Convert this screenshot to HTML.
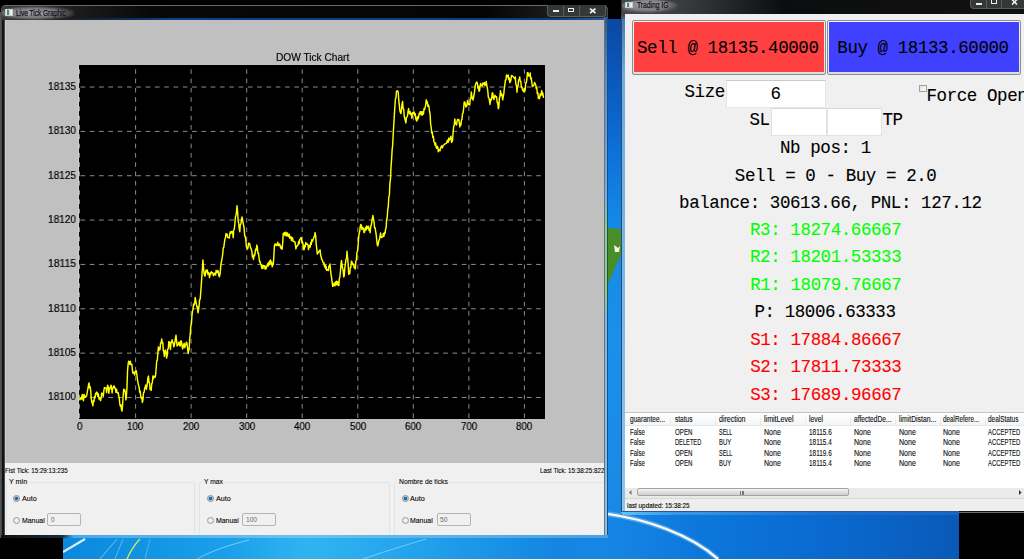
<!DOCTYPE html>
<html><head><meta charset="utf-8"><style>
html,body{margin:0;padding:0;}
body{width:1024px;height:559px;background:#000;position:relative;overflow:hidden;font-family:"Liberation Sans",sans-serif;}
.abs{position:absolute;}
.t{position:absolute;white-space:pre;}
</style></head><body>
<div class="abs" style="left:608px;top:19px;width:14px;height:500px;background:linear-gradient(#0a48a4 0px,#0a58bc 60px,#0c70d8 130px,#1488e6 200px,#1a90ea 320px,#1a88e6 500px)"></div>
<svg class="abs" style="left:608px;top:220px" width="14" height="80"><polygon points="0,8 14,9 14,32 0,64" fill="#4a8e2a"/><path d="M6,25 L10,28 L12,26 L11,32 L7,32 Z" fill="#f4f8f0"/></svg>
<div class="abs" style="left:63px;top:514px;width:896px;height:45px;background:linear-gradient(90deg,#0a88de 0px,#1aa0ea 164px,#30b4f0 246px,#22a2ec 355px,#1486e2 490px,#1686e4 545px,#0c78dc 633px,#0a6cd2 738px,#0a60c2 843px,#0a58b6 896px)"></div>
<svg class="abs" style="left:600px;top:510px" width="160" height="49"><path d="M8,4 C45,9 90,24 118,49" fill="none" stroke="rgba(255,255,255,0.3)" stroke-width="5"/><path d="M8,4 C45,9 90,24 118,49" fill="none" stroke="#fff" stroke-width="2.2"/></svg>
<svg class="abs" style="left:63px;top:538px" width="546" height="21"><path d="M0,14 L22,1" stroke="rgba(255,255,255,0.85)" stroke-width="2.2"/><path d="M37,21 L54,1" stroke="rgba(200,235,255,0.55)" stroke-width="1"/><path d="M52,21 L60,1" stroke="rgba(200,235,255,0.45)" stroke-width="1"/><path d="M64,21 C68,12 72,6 77,1" fill="none" stroke="#c8f050" stroke-width="1.3"/><path d="M82,21 L87,1" stroke="rgba(200,235,255,0.35)" stroke-width="1"/><path d="M134,21 C150,12 170,6 186,2" fill="none" stroke="rgba(220,245,255,0.5)" stroke-width="1"/><path d="M300,21 C320,14 340,8 363,1" fill="none" stroke="rgba(220,245,255,0.45)" stroke-width="1"/></svg>
<div class="abs" style="left:0px;top:12px;width:1px;height:526px;background:#505452"></div>
<div class="abs" style="left:1px;top:5px;width:607px;height:533px;background:#44484a;border-radius:5px 5px 0 0;box-shadow:inset 0 1px 0 #6a6a6a"></div>
<div class="abs" style="left:2px;top:6px;width:605px;height:14px;border-radius:4px 4px 0 0;background:linear-gradient(90deg,#3a3d3f 0%,#202223 8%,#070809 25%,#040506 80%,#2a2c2e 100%)"></div>
<div class="abs" style="left:62px;top:18px;width:545px;height:2px;background:linear-gradient(90deg,rgba(20,60,130,0),#10408a 20%,#0c3a80 90%,#2a5aa0)"></div>
<div class="abs" style="left:2px;top:6px;width:72px;height:14px;border-radius:40%;background:radial-gradient(ellipse at 45% 50%,rgba(175,175,175,0.9) 0%,rgba(150,150,150,0.75) 45%,rgba(90,90,90,0.3) 70%,rgba(60,60,60,0) 85%)"></div>
<div class="abs" style="left:2px;top:20px;width:3px;height:518px;background:linear-gradient(90deg,#1c1e1f,#050505 40%,#5e6264)"></div>
<div class="abs" style="left:604px;top:17px;width:4px;height:521px;background:linear-gradient(#2a5aa0 0px,#4a90d8 60px,#6ab4ec 180px,#8ad07a 215px,#8ad07a 275px,#70bcf0 300px,#7ac8f4 521px);border-left:1px solid #687078;border-right:1px solid #2a4a70;box-sizing:border-box;border-radius:0 0 3px 0"></div>
<div class="abs" style="left:1px;top:535px;width:607px;height:3px;background:linear-gradient(90deg,#101010 0%,#1a2a3a 10%,#4aa8e8 12%,#6ac0f0 50%,#4aa0e0 100%)"></div>
<div class="abs" style="left:5px;top:20px;width:599px;height:443px;background:#c0c0c0;box-shadow:inset 1px 0 0 #cbcbcb"></div>
<div class="abs" style="left:5px;top:463px;width:599px;height:72px;background:#f0f0f0"></div>
<div class="abs" style="left:5px;top:9px;width:8px;height:7px;background:linear-gradient(90deg,#e8eef0 0%,#e8eef0 15%,#3a7a9a 15%,#40a070 50%,#e0e8e8 60%,#f4f4f4 100%);border:0.5px solid #ccc;box-sizing:border-box"></div>
<div class="abs" style="left:547px;top:5px;width:59px;height:12px;border-radius:0 0 4px 4px;background:#353839;border:1px solid #5a5d5f;border-top:none;box-sizing:border-box"></div>
<div class="abs" style="left:563px;top:6px;width:1px;height:10px;background:#5a5d5f"></div>
<div class="abs" style="left:579px;top:6px;width:1px;height:10px;background:#5a5d5f"></div>
<div class="abs" style="left:553px;top:10px;width:6px;height:2px;background:#f0f0f0"></div>
<div class="abs" style="left:568px;top:7.8px;width:6px;height:4.6px;border:1px solid #f0f0f0;border-top-width:1.6px;box-sizing:border-box"></div>
<svg class="abs" style="left:588.5px;top:7.5px" width="8" height="6"><path d="M1,0.6 L6.5,5.2 M6.5,0.6 L1,5.2" stroke="#f0f0f0" stroke-width="1.7"/></svg>
<svg class="abs" style="left:0;top:0" width="1024" height="559">
<rect x="79" y="65" width="466" height="354" fill="#000"/><line x1="78.5" y1="65" x2="78.5" y2="419" stroke="#cdcdcd" stroke-width="1"/>
<g stroke="#8c8c8c" stroke-width="1" stroke-dasharray="4.65 4.65"><line x1="80" y1="397.50" x2="545" y2="397.50" stroke-dashoffset="-0.5"/><line x1="80" y1="353.14" x2="545" y2="353.14" stroke-dashoffset="-0.5"/><line x1="80" y1="308.79" x2="545" y2="308.79" stroke-dashoffset="-0.5"/><line x1="80" y1="264.43" x2="545" y2="264.43" stroke-dashoffset="-0.5"/><line x1="80" y1="220.07" x2="545" y2="220.07" stroke-dashoffset="-0.5"/><line x1="80" y1="175.72" x2="545" y2="175.72" stroke-dashoffset="-0.5"/><line x1="80" y1="131.36" x2="545" y2="131.36" stroke-dashoffset="-0.5"/><line x1="80" y1="87.00" x2="545" y2="87.00" stroke-dashoffset="-0.5"/><line x1="79.5" y1="419" x2="79.5" y2="65" stroke-dashoffset="-1"/><line x1="135.6" y1="419" x2="135.6" y2="65" stroke-dashoffset="-1"/><line x1="191.1" y1="419" x2="191.1" y2="65" stroke-dashoffset="-1"/><line x1="246.7" y1="419" x2="246.7" y2="65" stroke-dashoffset="-1"/><line x1="302.2" y1="419" x2="302.2" y2="65" stroke-dashoffset="-1"/><line x1="357.8" y1="419" x2="357.8" y2="65" stroke-dashoffset="-1"/><line x1="413.3" y1="419" x2="413.3" y2="65" stroke-dashoffset="-1"/><line x1="468.9" y1="419" x2="468.9" y2="65" stroke-dashoffset="-1"/><line x1="524.4" y1="419" x2="524.4" y2="65" stroke-dashoffset="-1"/></g>
<polyline points="79.7,400.4 80.2,397.8 80.8,398.3 81.3,399.2 81.9,396.3 82.4,394.4 83.0,399.8 83.5,400.8 84.1,394.4 84.6,396.3 85.2,397.3 85.7,396.2 86.3,396.6 86.8,395.2 87.4,391.2 87.9,388.8 88.5,384.9 89.0,382.9 89.6,387.9 90.1,386.6 90.7,390.6 91.2,397.9 91.8,402.1 92.3,403.1 92.9,405.8 93.4,400.5 94.0,401.6 94.5,396.4 95.1,397.9 95.6,393.3 96.2,394.2 96.7,392.1 97.3,392.7 97.8,396.4 98.4,394.0 98.9,399.0 99.5,397.6 100.0,399.4 100.6,400.7 101.1,398.5 101.7,393.0 102.2,393.5 102.8,394.5 103.3,396.3 103.9,390.4 104.4,387.6 105.0,388.0 105.5,388.0 106.1,388.0 106.6,392.6 107.2,387.8 107.7,385.2 108.3,387.1 108.8,393.3 109.4,388.0 109.9,389.0 110.5,386.9 111.0,385.2 111.6,387.4 112.1,392.9 112.7,388.0 113.2,388.0 113.8,385.9 114.3,386.2 114.9,388.1 115.4,389.1 116.0,392.3 116.5,389.1 117.1,392.3 117.6,393.1 118.2,392.7 118.7,395.6 119.3,398.4 119.8,403.9 120.4,406.3 120.9,404.7 121.5,409.5 122.0,411.1 122.6,404.8 123.1,396.3 123.7,389.3 124.2,391.2 124.8,389.8 125.3,392.6 125.9,399.9 126.4,396.2 127.0,387.0 127.5,371.4 128.1,364.4 128.6,361.2 129.2,362.8 129.7,364.4 130.3,361.2 130.8,364.4 131.4,364.4 131.9,364.3 132.5,371.2 133.0,373.4 133.6,372.5 134.1,372.2 134.7,375.0 135.2,371.5 135.8,371.1 136.3,370.7 136.9,375.1 137.4,379.0 138.0,382.9 138.5,385.2 139.1,387.2 139.7,392.4 140.2,391.2 140.8,396.4 141.3,398.4 141.9,397.2 142.4,402.4 143.0,399.7 143.5,392.8 144.1,392.3 144.6,388.5 145.2,387.0 145.7,384.9 146.3,389.3 146.8,387.0 147.4,383.2 147.9,377.9 148.5,376.1 149.0,382.7 149.6,383.0 150.1,389.7 150.7,390.0 151.2,390.2 151.8,383.4 152.3,382.9 152.9,376.1 153.4,378.7 154.0,376.1 154.5,376.7 155.1,377.2 155.6,375.2 156.2,368.0 156.7,361.0 157.3,360.3 157.8,353.8 158.4,346.9 158.9,350.6 159.5,348.0 160.0,349.6 160.6,343.0 161.1,342.9 161.7,339.0 162.2,342.9 162.8,342.4 163.3,350.6 163.9,352.3 164.4,356.4 165.0,350.6 165.5,350.1 166.1,353.0 166.6,358.1 167.2,355.1 167.7,349.0 168.3,348.6 168.8,341.8 169.4,342.0 169.9,345.8 170.5,349.5 171.0,342.0 171.6,342.7 172.1,339.8 172.7,342.3 173.2,342.9 173.8,346.8 174.3,345.4 174.9,342.0 175.4,338.6 176.0,335.2 176.5,340.1 177.1,346.0 177.6,345.2 178.2,344.7 178.7,342.3 179.3,342.5 179.8,345.8 180.4,345.7 180.9,340.7 181.5,341.5 182.0,345.3 182.6,348.9 183.1,347.5 183.7,344.5 184.2,343.3 184.8,347.7 185.3,345.6 185.9,344.4 186.4,342.2 187.0,343.1 187.5,347.4 188.1,353.5 188.6,351.1 189.2,349.3 189.7,338.8 190.3,333.7 190.8,326.0 191.4,324.2 191.9,316.1 192.5,311.1 193.0,309.4 193.6,304.0 194.1,305.0 194.7,302.8 195.2,297.4 195.8,300.8 196.3,303.8 196.9,306.8 197.4,306.6 198.0,312.8 198.5,309.9 199.1,306.3 199.6,299.5 200.2,299.2 200.7,292.5 201.3,284.8 201.8,277.0 202.4,269.3 202.9,260.0 203.5,267.4 204.0,272.7 204.6,275.9 205.1,276.1 205.7,271.5 206.2,270.1 206.8,271.9 207.3,269.9 207.9,274.4 208.4,272.6 209.0,274.0 209.5,277.6 210.1,273.0 210.6,274.8 211.2,271.8 211.7,272.1 212.3,272.9 212.8,272.7 213.4,275.7 213.9,273.9 214.5,274.5 215.0,273.1 215.6,274.9 216.1,270.4 216.7,272.2 217.2,272.6 217.8,270.4 218.3,271.5 218.9,275.7 219.4,276.8 220.0,274.6 220.5,269.4 221.1,263.4 221.6,261.1 222.2,257.7 222.7,254.2 223.3,247.6 223.8,247.5 224.4,242.6 224.9,239.3 225.5,237.6 226.0,233.6 226.6,235.4 227.1,234.0 227.7,237.4 228.2,237.6 228.8,237.8 229.3,238.0 229.9,233.4 230.4,231.8 231.0,233.3 231.5,231.6 232.1,231.4 232.6,231.6 233.2,237.6 233.7,230.0 234.3,228.9 234.8,224.5 235.4,217.0 235.9,215.8 236.5,211.5 237.0,205.8 237.6,211.5 238.1,220.5 238.7,223.1 239.2,228.9 239.8,231.7 240.3,224.7 240.9,224.0 241.4,220.1 242.0,217.0 242.5,219.2 243.1,223.1 243.6,225.4 244.2,229.2 244.7,236.2 245.3,236.5 245.8,240.1 246.4,246.9 246.9,247.3 247.5,249.1 248.0,247.7 248.6,243.1 249.1,243.4 249.7,243.7 250.2,246.0 250.8,248.4 251.3,249.2 251.9,251.5 252.4,257.1 253.0,256.2 253.5,259.5 254.1,254.4 254.6,255.8 255.2,252.3 255.7,248.9 256.3,250.2 256.8,245.1 257.4,247.2 257.9,253.3 258.5,253.0 259.0,257.5 259.6,261.9 260.1,261.6 260.7,264.5 261.2,264.9 261.8,268.3 262.3,265.2 262.9,268.6 263.4,265.5 264.0,265.6 264.5,265.8 265.1,269.1 265.6,266.1 266.2,268.7 266.7,266.4 267.3,265.7 267.8,263.5 268.4,266.0 268.9,262.1 269.5,264.6 270.0,260.7 270.6,260.0 271.1,264.0 271.7,262.2 272.2,266.8 272.8,265.0 273.3,264.3 273.9,255.8 274.4,245.7 275.0,243.9 275.5,243.9 276.1,245.5 276.6,245.5 277.2,243.9 277.7,242.3 278.3,245.5 278.8,245.5 279.4,243.9 279.9,244.7 280.5,247.4 281.0,248.5 281.6,246.4 282.1,249.3 282.7,243.0 283.2,233.5 283.8,233.1 284.3,232.7 284.9,235.5 285.4,232.3 286.0,232.5 286.5,235.9 287.1,232.9 287.6,233.1 288.2,236.5 288.7,236.7 289.3,234.2 289.8,238.2 290.4,237.5 290.9,236.7 291.5,240.6 292.0,237.6 292.6,237.9 293.1,241.4 293.7,241.6 294.2,241.5 294.8,241.8 295.3,243.8 295.9,248.9 296.4,247.0 297.0,245.7 297.5,245.9 298.1,244.5 298.6,241.5 299.2,243.7 299.7,239.7 300.3,238.9 300.8,238.0 301.4,237.5 301.9,242.9 302.5,241.9 303.0,244.1 303.6,249.5 304.1,249.7 304.7,245.2 305.2,247.0 305.8,242.4 306.3,244.2 306.9,244.0 307.4,243.8 308.0,245.2 308.5,249.7 309.1,246.7 309.6,245.3 310.2,247.1 310.7,242.5 311.3,244.3 311.8,239.7 312.4,241.4 312.9,240.0 313.5,238.5 314.0,237.1 314.6,235.6 315.1,232.6 315.7,236.0 316.2,244.1 316.8,249.1 317.3,254.1 317.9,253.2 318.4,252.4 319.0,251.5 319.5,250.7 320.1,249.9 320.6,255.0 321.2,257.2 321.7,259.4 322.3,260.0 322.8,261.8 323.4,262.9 323.9,262.4 324.5,266.7 325.0,264.6 325.6,268.7 326.1,266.3 326.7,270.4 327.2,269.6 327.8,269.9 328.3,270.4 328.9,266.1 329.4,266.6 330.0,263.9 330.5,270.2 331.1,274.9 331.6,278.0 332.2,282.7 332.7,286.4 333.3,285.8 333.8,283.7 334.4,283.1 334.9,285.8 335.5,282.0 336.0,284.7 336.6,281.2 337.1,284.7 337.7,281.8 338.2,285.2 338.8,285.5 339.3,278.8 339.9,277.0 340.4,272.0 341.0,263.9 341.5,260.4 342.1,265.3 342.6,268.6 343.2,270.4 343.7,276.9 344.3,275.4 344.8,268.1 345.4,263.9 345.9,259.7 346.5,258.7 347.0,251.3 347.6,258.2 348.1,263.1 348.7,274.4 349.2,273.2 349.8,273.4 350.3,267.2 350.9,267.3 351.4,261.1 352.0,261.8 352.5,264.1 353.1,264.9 353.6,264.0 354.2,267.9 354.7,267.0 355.3,268.9 355.8,261.3 356.4,260.1 356.9,252.4 357.5,251.2 358.0,246.5 358.6,238.3 359.1,233.4 359.7,231.6 360.2,226.7 360.8,224.4 361.3,225.3 361.9,229.5 362.4,227.2 363.0,228.1 363.5,229.0 364.1,232.7 364.6,232.0 365.2,228.1 365.7,227.3 366.3,229.8 366.8,225.9 367.4,228.4 367.9,228.3 368.5,226.2 369.0,230.5 369.6,228.4 370.1,232.7 370.7,227.0 371.2,225.3 371.8,222.0 372.3,218.7 372.9,215.5 373.4,218.6 374.0,221.6 374.5,227.8 375.1,227.7 375.6,231.1 376.2,234.7 376.7,239.9 377.3,245.1 377.8,245.9 378.4,243.1 378.9,240.4 379.5,239.2 380.0,236.4 380.6,233.0 381.1,237.4 381.7,237.4 382.2,237.1 382.8,236.8 383.3,233.4 383.9,236.3 384.4,232.8 385.0,233.7 385.5,229.3 386.1,228.2 386.6,219.7 387.2,217.3 387.7,210.1 388.3,206.2 388.8,197.4 389.4,194.9 389.9,183.6 390.5,178.8 391.0,167.5 391.6,159.4 392.1,150.5 392.7,144.5 393.2,134.5 393.8,124.5 394.3,115.8 394.9,106.0 395.4,99.3 396.0,97.5 396.5,91.1 397.1,91.2 397.6,90.8 398.2,92.0 398.7,99.7 399.3,104.6 399.8,110.2 400.4,112.5 400.9,113.6 401.5,109.6 402.0,104.1 402.6,101.4 403.1,108.5 403.7,109.1 404.2,116.2 404.8,118.5 405.3,120.8 405.9,122.9 406.4,117.5 407.0,116.9 407.5,116.2 408.1,110.8 408.6,108.6 409.2,112.9 409.7,113.9 410.3,111.8 410.8,114.5 411.4,113.9 411.9,118.2 412.5,112.8 413.0,113.8 413.6,112.0 414.1,112.0 414.7,115.3 415.2,113.7 415.8,118.6 416.3,120.2 416.9,121.1 417.4,116.8 418.0,118.9 418.5,117.8 419.1,113.5 419.6,114.0 420.2,111.8 420.7,111.8 421.3,115.0 421.8,111.8 422.4,115.0 422.9,111.8 423.5,114.0 424.0,108.6 424.6,109.6 425.1,107.3 425.7,105.1 426.2,99.7 426.8,103.2 427.3,101.6 427.9,106.5 428.4,105.0 429.0,106.6 429.5,111.5 430.1,114.0 430.6,123.9 431.2,127.3 431.7,133.1 432.3,132.0 432.8,137.4 433.4,136.3 433.9,141.7 434.5,142.2 435.0,145.0 435.6,142.9 436.1,147.2 436.7,148.3 437.2,146.3 437.8,147.4 438.3,151.7 438.9,149.6 439.4,150.3 440.0,150.8 440.5,148.1 441.1,146.9 441.6,145.8 442.2,147.9 442.7,147.1 443.3,145.1 443.8,144.8 444.4,144.4 444.9,144.0 445.5,143.7 446.0,143.3 446.6,143.0 447.1,141.0 447.7,140.3 448.2,142.4 448.8,138.1 449.3,140.2 449.9,139.1 450.4,138.0 451.0,136.3 451.5,142.5 452.1,141.5 452.6,139.7 453.2,131.5 453.7,126.5 454.3,124.7 454.8,118.9 455.4,123.7 455.9,123.7 456.5,125.0 457.0,121.4 457.6,119.4 458.1,120.6 458.7,119.5 459.2,121.7 459.8,127.0 460.3,123.4 460.9,125.1 461.4,120.5 462.0,119.1 462.5,113.6 463.1,112.9 463.6,109.0 464.2,101.9 464.7,102.0 465.3,103.7 465.8,107.0 466.4,106.2 466.9,105.7 467.5,100.4 468.0,102.8 468.6,104.5 469.1,104.7 469.7,104.9 470.2,99.5 470.8,99.0 471.3,92.0 471.9,96.8 472.4,98.4 473.0,100.0 473.5,97.9 474.1,94.5 474.6,91.1 475.2,85.7 475.7,84.1 476.3,82.5 476.8,82.0 477.4,83.5 477.9,88.2 478.5,86.5 479.0,91.2 479.6,90.5 480.1,85.4 480.7,83.5 481.2,85.6 481.8,85.8 482.3,86.0 482.9,82.9 483.4,83.1 484.0,84.6 484.5,82.6 485.1,85.5 485.6,85.1 486.2,81.5 486.7,84.5 487.3,87.8 487.8,91.1 488.4,97.6 488.9,97.7 489.5,101.0 490.0,104.5 490.6,99.2 491.1,100.3 491.7,98.1 492.2,92.8 492.8,93.1 493.3,98.0 493.9,99.6 494.4,96.5 495.0,95.2 495.5,97.1 496.1,96.9 496.6,96.7 497.2,102.8 497.7,102.6 498.3,108.8 498.8,107.2 499.4,98.5 499.9,96.3 500.5,90.8 501.0,95.5 501.6,93.7 502.1,95.1 502.7,99.8 503.2,96.6 503.8,94.1 504.3,88.4 504.9,84.3 505.4,80.2 506.0,79.8 506.5,75.0 507.1,76.6 507.6,76.7 508.2,75.0 508.7,79.7 509.3,78.0 509.8,82.6 510.4,81.7 510.9,80.2 511.5,75.5 512.0,75.6 512.6,76.0 513.1,76.7 513.7,77.4 514.2,78.1 514.8,78.8 515.3,77.0 515.9,84.4 516.4,85.4 517.0,92.2 517.5,85.9 518.1,85.9 518.6,79.6 519.2,79.6 519.7,77.0 520.3,81.5 520.8,81.2 521.4,87.3 521.9,86.9 522.5,90.1 523.0,90.1 523.6,91.7 524.1,88.5 524.7,91.7 525.2,89.3 525.8,82.7 526.3,82.6 526.9,79.2 527.4,72.7 528.0,72.7 528.5,75.9 529.1,75.9 529.6,75.9 530.2,72.9 530.7,78.7 531.3,78.1 531.8,82.3 532.4,86.5 532.9,86.3 533.5,85.6 534.0,84.8 534.6,82.5 535.1,83.4 535.7,84.7 536.2,88.7 536.8,88.0 537.3,93.7 537.9,92.9 538.4,98.6 539.0,96.8 539.5,98.6 540.1,94.0 540.6,95.7 541.2,94.3 541.7,90.6 542.3,94.9 542.8,92.9 543.4,97.2 543.9,96.7" fill="none" stroke="#ffff00" stroke-width="1.45" stroke-linejoin="round"/>
</svg>
<div class="abs" style="left:6px;top:481.5px;width:189px;height:52px;border:1px solid #dde4ea;border-bottom:none;border-radius:2px 2px 0 0;box-sizing:border-box"></div>
<div class="abs" style="left:198.5px;top:481.5px;width:191px;height:52px;border:1px solid #dde4ea;border-bottom:none;border-radius:2px 2px 0 0;box-sizing:border-box"></div>
<div class="abs" style="left:393.5px;top:481.5px;width:210.5px;height:52px;border:1px solid #dde4ea;border-bottom:none;border-radius:2px 2px 0 0;box-sizing:border-box;border-right:none"></div>
<div class="abs" style="left:7.9px;top:478px;width:20.5px;height:6px;background:#f0f0f0"></div>
<div class="abs" style="left:202.1px;top:478px;width:21.2px;height:6px;background:#f0f0f0"></div>
<div class="abs" style="left:397.1px;top:478px;width:51.2px;height:6px;background:#f0f0f0"></div>
<div class="abs" style="left:12.9px;top:495.2px;width:7px;height:7px;border-radius:50%;border:1px solid #8a8a8a;background:radial-gradient(circle,#1a5a9a 0,#2a7ac0 1.5px,#dcdcdc 2.3px,#f4f4f4 100%);box-sizing:border-box"></div>
<div class="abs" style="left:12.9px;top:517.4px;width:7px;height:7px;border-radius:50%;border:1px solid #9a9a9a;background:radial-gradient(circle,#f8f8f8 0,#e0e0e0 100%);box-sizing:border-box"></div>
<div class="abs" style="left:207.2px;top:495.2px;width:7px;height:7px;border-radius:50%;border:1px solid #8a8a8a;background:radial-gradient(circle,#1a5a9a 0,#2a7ac0 1.5px,#dcdcdc 2.3px,#f4f4f4 100%);box-sizing:border-box"></div>
<div class="abs" style="left:207.2px;top:517.4px;width:7px;height:7px;border-radius:50%;border:1px solid #9a9a9a;background:radial-gradient(circle,#f8f8f8 0,#e0e0e0 100%);box-sizing:border-box"></div>
<div class="abs" style="left:401.5px;top:495.2px;width:7px;height:7px;border-radius:50%;border:1px solid #8a8a8a;background:radial-gradient(circle,#1a5a9a 0,#2a7ac0 1.5px,#dcdcdc 2.3px,#f4f4f4 100%);box-sizing:border-box"></div>
<div class="abs" style="left:401.5px;top:517.4px;width:7px;height:7px;border-radius:50%;border:1px solid #9a9a9a;background:radial-gradient(circle,#f8f8f8 0,#e0e0e0 100%);box-sizing:border-box"></div>
<div class="abs" style="left:47.3px;top:513.4px;width:34px;height:13px;border:1px solid #b4b4b4;border-radius:2px;background:#f0f0f0;box-sizing:border-box"></div>
<div class="abs" style="left:242.3px;top:513.4px;width:34px;height:13px;border:1px solid #b4b4b4;border-radius:2px;background:#f0f0f0;box-sizing:border-box"></div>
<div class="abs" style="left:436.5px;top:513.4px;width:34px;height:13px;border:1px solid #b4b4b4;border-radius:2px;background:#f0f0f0;box-sizing:border-box"></div>
<div class="abs" style="left:621px;top:0px;width:403px;height:515px;background:#2f3133"></div>
<div class="abs" style="left:622px;top:0px;width:402px;height:14px;background:linear-gradient(90deg,#484b4d 0%,#3a3c3e 15%,#0c0d0e 40%,#111 100%)"></div>
<div class="abs" style="left:622px;top:0px;width:56px;height:13px;border-radius:40%;background:radial-gradient(ellipse at 45% 40%,rgba(175,175,175,0.9) 0%,rgba(150,150,150,0.75) 45%,rgba(90,90,90,0.3) 70%,rgba(60,60,60,0) 85%)"></div>
<div class="abs" style="left:621px;top:14px;width:4px;height:501px;background:linear-gradient(#3a3c3e 0px,#4a7ab0 6px,#6aaee8 60px,#7ab8ee 300px,#8ac8f4 501px);border-left:1px solid #3a4a5a;box-sizing:border-box"></div>
<div class="abs" style="left:621px;top:511px;width:338px;height:4px;background:linear-gradient(90deg,#60c4f4,#3a9ae6 15%,#1a70d0 60%,#1a64c4);border-top:1px solid #2a5a90;box-sizing:border-box;border-radius:0 0 0 3px"></div>
<div class="abs" style="left:959px;top:511px;width:65px;height:4px;background:linear-gradient(#111 0,#111 1px,#777 1.2px,#555 2px,#000 2.5px)"></div>
<div class="abs" style="left:625px;top:2px;width:8px;height:6px;background:linear-gradient(90deg,#e8eef0 0%,#e8eef0 15%,#3a7a9a 15%,#40a070 50%,#e0e8e8 60%,#f4f4f4 100%);border:0.5px solid #ccc;box-sizing:border-box"></div>
<div class="abs" style="left:970px;top:0px;width:54px;height:8.5px;border-radius:0 0 0 4px;background:#353839;border:1px solid #5a5d5f;border-top:none;border-right:none;box-sizing:border-box"></div>
<div class="abs" style="left:986px;top:0px;width:1px;height:8px;background:#5a5d5f"></div>
<div class="abs" style="left:1001px;top:0px;width:1px;height:8px;background:#5a5d5f"></div>
<div class="abs" style="left:976px;top:3px;width:6px;height:1.6px;background:#f0f0f0"></div>
<div class="abs" style="left:991px;top:0px;width:6px;height:4px;border:1px solid #f0f0f0;border-top:none;box-sizing:border-box"></div>
<svg class="abs" style="left:1011px;top:0px" width="8" height="5"><path d="M1,-0.5 L6,4.5 M6,-0.5 L1,4.5" stroke="#f0f0f0" stroke-width="1.6"/></svg>
<div class="abs" style="left:625px;top:14px;width:399px;height:497px;background:#f0f0f0"></div>
<div class="abs" style="left:631.5px;top:19.5px;width:194px;height:55.2px;border:1px solid #8d8d8d;border-radius:2px;background:linear-gradient(#f6f6f6,#dcdfe0);box-sizing:border-box"></div>
<div class="abs" style="left:633.5px;top:22px;width:190px;height:50px;background:#ff4040"></div>
<div class="abs" style="left:827px;top:19.5px;width:194px;height:55.2px;border:1px solid #8d8d8d;border-radius:2px;background:linear-gradient(#f6f6f6,#dcdfe0);box-sizing:border-box"></div>
<div class="abs" style="left:829px;top:22px;width:190px;height:50px;background:#4040ff"></div>
<div class="abs" style="left:725.5px;top:80.2px;width:100.5px;height:28.1px;background:#fff;border:1px solid #e6e6e6;border-top-color:#c8c8c8;box-sizing:border-box"></div>
<div class="abs" style="left:919px;top:84.5px;width:7.5px;height:7.5px;border:1px solid #a0a0a0;background:linear-gradient(135deg,#e4e4e4,#fafafa);box-sizing:border-box"></div>
<div class="abs" style="left:770.5px;top:108.2px;width:56.5px;height:28.2px;background:#fff;border:1px solid #e2e2e2;border-top-color:#d8d8d8;box-sizing:border-box"></div>
<div class="abs" style="left:826.5px;top:108.2px;width:55.5px;height:28.2px;background:#fff;border:1px solid #e2e2e2;border-top-color:#d8d8d8;box-sizing:border-box"></div>
<div class="abs" style="left:625px;top:411.5px;width:399px;height:77px;background:#fff;border-top:1px solid #c4c4c4;box-sizing:border-box"></div>
<div class="abs" style="left:625px;top:412.5px;width:399px;height:13px;background:linear-gradient(#ffffff,#f4f5f6);border-bottom:1px solid #e4e6e8;box-sizing:border-box"></div>
<div class="abs" style="left:670.2px;top:413px;width:1px;height:12px;background:linear-gradient(#fff,#e0e2e4)"></div>
<div class="abs" style="left:715.2px;top:413px;width:1px;height:12px;background:linear-gradient(#fff,#e0e2e4)"></div>
<div class="abs" style="left:760.1px;top:413px;width:1px;height:12px;background:linear-gradient(#fff,#e0e2e4)"></div>
<div class="abs" style="left:805.0px;top:413px;width:1px;height:12px;background:linear-gradient(#fff,#e0e2e4)"></div>
<div class="abs" style="left:850.0px;top:413px;width:1px;height:12px;background:linear-gradient(#fff,#e0e2e4)"></div>
<div class="abs" style="left:894.9px;top:413px;width:1px;height:12px;background:linear-gradient(#fff,#e0e2e4)"></div>
<div class="abs" style="left:939.7px;top:413px;width:1px;height:12px;background:linear-gradient(#fff,#e0e2e4)"></div>
<div class="abs" style="left:984.6px;top:413px;width:1px;height:12px;background:linear-gradient(#fff,#e0e2e4)"></div>
<div class="abs" style="left:625px;top:488px;width:399px;height:9.5px;background:#eaeaea"></div>
<div class="abs" style="left:627px;top:490px;width:5px;height:5px;background:none"></div>
<svg class="abs" style="left:628px;top:489px" width="5" height="7"><path d="M3.5,1 L1,3.5 L3.5,6 Z" fill="#707070"/></svg>
<svg class="abs" style="left:1018px;top:489px" width="5" height="7"><path d="M1,1 L3.5,3.5 L1,6 Z" fill="#303030"/></svg>
<div class="abs" style="left:636.5px;top:488.4px;width:212px;height:7.8px;border:1px solid #a4a4a4;border-radius:2px;background:linear-gradient(#f4f4f4,#dcdcdc 60%,#d0d0d0);box-sizing:border-box"></div>
<div class="abs" style="left:740px;top:490.5px;width:4px;height:4px;border-left:1px solid #777;border-right:1px solid #777;box-sizing:border-box"></div>
<div class="abs" style="left:742px;top:490.5px;width:1px;height:4px;background:#777"></div>
<div class="abs" style="left:625px;top:497.5px;width:399px;height:13.5px;background:#f0eeec;border-top:1px solid #d8d8d8;box-sizing:border-box"></div>
<div class="t" style="left:16.00px;top:8.05px;font-family:'Liberation Sans';font-size:8.5px;line-height:11px;color:#101020;font-weight:normal;transform:scaleX(0.7638);transform-origin:0 0;-webkit-text-stroke:0.25px currentColor;">Live Tick Graphic</div>
<div class="t" style="left:48.30px;top:389.43px;font-family:'Liberation Sans';font-size:10.6px;line-height:14px;color:#000;font-weight:normal;transform:scaleX(0.9502);transform-origin:0 0;will-change:transform;-webkit-text-stroke:0.2px #000;">18100</div>
<div class="t" style="left:48.30px;top:345.07px;font-family:'Liberation Sans';font-size:10.6px;line-height:14px;color:#000;font-weight:normal;transform:scaleX(0.9502);transform-origin:0 0;will-change:transform;-webkit-text-stroke:0.2px #000;">18105</div>
<div class="t" style="left:48.30px;top:300.71px;font-family:'Liberation Sans';font-size:10.6px;line-height:14px;color:#000;font-weight:normal;transform:scaleX(0.9760);transform-origin:0 0;will-change:transform;-webkit-text-stroke:0.2px #000;">18110</div>
<div class="t" style="left:48.30px;top:256.36px;font-family:'Liberation Sans';font-size:10.6px;line-height:14px;color:#000;font-weight:normal;transform:scaleX(0.9760);transform-origin:0 0;will-change:transform;-webkit-text-stroke:0.2px #000;">18115</div>
<div class="t" style="left:48.30px;top:212.00px;font-family:'Liberation Sans';font-size:10.6px;line-height:14px;color:#000;font-weight:normal;transform:scaleX(0.9502);transform-origin:0 0;will-change:transform;-webkit-text-stroke:0.2px #000;">18120</div>
<div class="t" style="left:48.30px;top:167.64px;font-family:'Liberation Sans';font-size:10.6px;line-height:14px;color:#000;font-weight:normal;transform:scaleX(0.9502);transform-origin:0 0;will-change:transform;-webkit-text-stroke:0.2px #000;">18125</div>
<div class="t" style="left:48.30px;top:123.29px;font-family:'Liberation Sans';font-size:10.6px;line-height:14px;color:#000;font-weight:normal;transform:scaleX(0.9502);transform-origin:0 0;will-change:transform;-webkit-text-stroke:0.2px #000;">18130</div>
<div class="t" style="left:48.30px;top:78.93px;font-family:'Liberation Sans';font-size:10.6px;line-height:14px;color:#000;font-weight:normal;transform:scaleX(0.9502);transform-origin:0 0;will-change:transform;-webkit-text-stroke:0.2px #000;">18135</div>
<div class="t" style="left:77.25px;top:418.93px;font-family:'Liberation Sans';font-size:10.6px;line-height:14px;color:#000;font-weight:normal;transform:scaleX(0.9312);transform-origin:0 0;will-change:transform;-webkit-text-stroke:0.2px #000;">0</div>
<div class="t" style="left:127.45px;top:418.93px;font-family:'Liberation Sans';font-size:10.6px;line-height:14px;color:#000;font-weight:normal;transform:scaleX(0.9159);transform-origin:0 0;will-change:transform;-webkit-text-stroke:0.2px #000;">100</div>
<div class="t" style="left:183.00px;top:418.93px;font-family:'Liberation Sans';font-size:10.6px;line-height:14px;color:#000;font-weight:normal;transform:scaleX(0.9159);transform-origin:0 0;will-change:transform;-webkit-text-stroke:0.2px #000;">200</div>
<div class="t" style="left:238.55px;top:418.93px;font-family:'Liberation Sans';font-size:10.6px;line-height:14px;color:#000;font-weight:normal;transform:scaleX(0.9159);transform-origin:0 0;will-change:transform;-webkit-text-stroke:0.2px #000;">300</div>
<div class="t" style="left:294.10px;top:418.93px;font-family:'Liberation Sans';font-size:10.6px;line-height:14px;color:#000;font-weight:normal;transform:scaleX(0.9159);transform-origin:0 0;will-change:transform;-webkit-text-stroke:0.2px #000;">400</div>
<div class="t" style="left:349.65px;top:418.93px;font-family:'Liberation Sans';font-size:10.6px;line-height:14px;color:#000;font-weight:normal;transform:scaleX(0.9159);transform-origin:0 0;will-change:transform;-webkit-text-stroke:0.2px #000;">500</div>
<div class="t" style="left:405.20px;top:418.93px;font-family:'Liberation Sans';font-size:10.6px;line-height:14px;color:#000;font-weight:normal;transform:scaleX(0.9159);transform-origin:0 0;will-change:transform;-webkit-text-stroke:0.2px #000;">600</div>
<div class="t" style="left:460.75px;top:418.93px;font-family:'Liberation Sans';font-size:10.6px;line-height:14px;color:#000;font-weight:normal;transform:scaleX(0.9159);transform-origin:0 0;will-change:transform;-webkit-text-stroke:0.2px #000;">700</div>
<div class="t" style="left:516.30px;top:418.93px;font-family:'Liberation Sans';font-size:10.6px;line-height:14px;color:#000;font-weight:normal;transform:scaleX(0.9159);transform-origin:0 0;will-change:transform;-webkit-text-stroke:0.2px #000;">800</div>
<div class="t" style="left:275.50px;top:51.40px;font-family:'Liberation Sans';font-size:10.1px;line-height:13px;color:#000;font-weight:normal;transform:scaleX(1.0054);transform-origin:0 0;will-change:transform;-webkit-text-stroke:0.15px #000;">DOW Tick Chart</div>
<div class="t" style="left:9.40px;top:477.13px;font-family:'Liberation Sans';font-size:8px;line-height:10px;color:#000;font-weight:normal;transform:scaleX(0.8911);transform-origin:0 0;-webkit-text-stroke:0.1px currentColor;">Y min</div>
<div class="t" style="left:203.60px;top:477.13px;font-family:'Liberation Sans';font-size:8px;line-height:10px;color:#000;font-weight:normal;transform:scaleX(0.8344);transform-origin:0 0;-webkit-text-stroke:0.1px currentColor;">Y max</div>
<div class="t" style="left:398.60px;top:477.13px;font-family:'Liberation Sans';font-size:8px;line-height:10px;color:#000;font-weight:normal;transform:scaleX(0.8443);transform-origin:0 0;-webkit-text-stroke:0.1px currentColor;">Nombre de ticks</div>
<div class="t" style="left:21.70px;top:494.03px;font-family:'Liberation Sans';font-size:8px;line-height:10px;color:#000;font-weight:normal;transform:scaleX(0.8987);transform-origin:0 0;-webkit-text-stroke:0.1px currentColor;">Auto</div>
<div class="t" style="left:21.70px;top:515.83px;font-family:'Liberation Sans';font-size:8px;line-height:10px;color:#000;font-weight:normal;transform:scaleX(0.8648);transform-origin:0 0;-webkit-text-stroke:0.1px currentColor;">Manual</div>
<div class="t" style="left:216.00px;top:494.03px;font-family:'Liberation Sans';font-size:8px;line-height:10px;color:#000;font-weight:normal;transform:scaleX(0.8987);transform-origin:0 0;-webkit-text-stroke:0.1px currentColor;">Auto</div>
<div class="t" style="left:216.00px;top:515.83px;font-family:'Liberation Sans';font-size:8px;line-height:10px;color:#000;font-weight:normal;transform:scaleX(0.8648);transform-origin:0 0;-webkit-text-stroke:0.1px currentColor;">Manual</div>
<div class="t" style="left:410.30px;top:494.03px;font-family:'Liberation Sans';font-size:8px;line-height:10px;color:#000;font-weight:normal;transform:scaleX(0.8987);transform-origin:0 0;-webkit-text-stroke:0.1px currentColor;">Auto</div>
<div class="t" style="left:410.30px;top:515.83px;font-family:'Liberation Sans';font-size:8px;line-height:10px;color:#000;font-weight:normal;transform:scaleX(0.8648);transform-origin:0 0;-webkit-text-stroke:0.1px currentColor;">Manual</div>
<div class="t" style="left:51.10px;top:514.93px;font-family:'Liberation Sans';font-size:8px;line-height:10px;color:#6a6a6a;font-weight:normal;transform:scaleX(0.8084);transform-origin:0 0;">0</div>
<div class="t" style="left:246.10px;top:514.93px;font-family:'Liberation Sans';font-size:8px;line-height:10px;color:#6a6a6a;font-weight:normal;transform:scaleX(0.8234);transform-origin:0 0;">100</div>
<div class="t" style="left:440.30px;top:514.93px;font-family:'Liberation Sans';font-size:8px;line-height:10px;color:#6a6a6a;font-weight:normal;transform:scaleX(0.8309);transform-origin:0 0;">50</div>
<div class="t" style="left:4.60px;top:465.63px;font-family:'Liberation Sans';font-size:8px;line-height:10px;color:#000;font-weight:normal;transform:scaleX(0.7776);transform-origin:0 0;-webkit-text-stroke:0.12px currentColor;">Fist Tick: 15:29:13:235</div>
<div class="t" style="left:539.80px;top:465.63px;font-family:'Liberation Sans';font-size:8px;line-height:10px;color:#000;font-weight:normal;transform:scaleX(0.7784);transform-origin:0 0;-webkit-text-stroke:0.12px currentColor;">Last Tick: 15:38:25:822</div>
<div class="t" style="left:637.00px;top:0.25px;font-family:'Liberation Sans';font-size:8.5px;line-height:11px;color:#101020;font-weight:normal;transform:scaleX(0.7881);transform-origin:0 0;-webkit-text-stroke:0.25px currentColor;">Trading IG</div>
<div class="t" style="left:637.00px;top:36.84px;font-family:'Liberation Mono';font-size:17.5px;line-height:23px;color:#000;font-weight:normal;letter-spacing:-0.42px;-webkit-text-stroke:0.1px currentColor;">Sell @ 18135.40000</div>
<div class="t" style="left:837.30px;top:36.84px;font-family:'Liberation Mono';font-size:17.5px;line-height:23px;color:#000;font-weight:normal;letter-spacing:-0.42px;-webkit-text-stroke:0.1px currentColor;">Buy @ 18133.60000</div>
<div class="t" style="left:684.50px;top:81.04px;font-family:'Liberation Mono';font-size:17.5px;line-height:23px;color:#000;font-weight:normal;letter-spacing:-0.42px;-webkit-text-stroke:0.1px currentColor;">Size</div>
<div class="t" style="left:770.50px;top:83.34px;font-family:'Liberation Mono';font-size:17.5px;line-height:23px;color:#000;font-weight:normal;letter-spacing:-0.42px;-webkit-text-stroke:0.1px currentColor;">6</div>
<div class="t" style="left:926.50px;top:84.74px;font-family:'Liberation Mono';font-size:17.5px;line-height:23px;color:#000;font-weight:normal;letter-spacing:-0.42px;-webkit-text-stroke:0.1px currentColor;">Force Open</div>
<div class="t" style="left:749.50px;top:109.24px;font-family:'Liberation Mono';font-size:17.5px;line-height:23px;color:#000;font-weight:normal;letter-spacing:-0.42px;-webkit-text-stroke:0.1px currentColor;">SL</div>
<div class="t" style="left:882.50px;top:109.24px;font-family:'Liberation Mono';font-size:17.5px;line-height:23px;color:#000;font-weight:normal;letter-spacing:-0.42px;-webkit-text-stroke:0.1px currentColor;">TP</div>
<div class="t" style="left:780.00px;top:137.24px;font-family:'Liberation Mono';font-size:17.5px;line-height:23px;color:#000;font-weight:normal;letter-spacing:-0.42px;-webkit-text-stroke:0.1px currentColor;">Nb pos: 1</div>
<div class="t" style="left:734.80px;top:164.64px;font-family:'Liberation Mono';font-size:17.5px;line-height:23px;color:#000;font-weight:normal;letter-spacing:-0.42px;-webkit-text-stroke:0.1px currentColor;">Sell = 0 - Buy = 2.0</div>
<div class="t" style="left:679.10px;top:191.84px;font-family:'Liberation Mono';font-size:17.5px;line-height:23px;color:#000;font-weight:normal;letter-spacing:-0.42px;-webkit-text-stroke:0.1px currentColor;">balance: 30613.66, PNL: 127.12</div>
<div class="t" style="left:750.00px;top:219.14px;font-family:'Liberation Mono';font-size:17.5px;line-height:23px;color:#00ff00;font-weight:normal;letter-spacing:-0.42px;-webkit-text-stroke:0.1px currentColor;">R3: 18274.66667</div>
<div class="t" style="left:750.00px;top:246.44px;font-family:'Liberation Mono';font-size:17.5px;line-height:23px;color:#00ff00;font-weight:normal;letter-spacing:-0.42px;-webkit-text-stroke:0.1px currentColor;">R2: 18201.53333</div>
<div class="t" style="left:750.20px;top:273.64px;font-family:'Liberation Mono';font-size:17.5px;line-height:23px;color:#00ff00;font-weight:normal;letter-spacing:-0.42px;-webkit-text-stroke:0.1px currentColor;">R1: 18079.76667</div>
<div class="t" style="left:754.40px;top:301.04px;font-family:'Liberation Mono';font-size:17.5px;line-height:23px;color:#000;font-weight:normal;letter-spacing:-0.42px;-webkit-text-stroke:0.1px currentColor;">P: 18006.63333</div>
<div class="t" style="left:750.20px;top:328.84px;font-family:'Liberation Mono';font-size:17.5px;line-height:23px;color:#ff0000;font-weight:normal;letter-spacing:-0.42px;-webkit-text-stroke:0.1px currentColor;">S1: 17884.86667</div>
<div class="t" style="left:750.20px;top:356.44px;font-family:'Liberation Mono';font-size:17.5px;line-height:23px;color:#ff0000;font-weight:normal;letter-spacing:-0.42px;-webkit-text-stroke:0.1px currentColor;">S2: 17811.73333</div>
<div class="t" style="left:750.20px;top:384.04px;font-family:'Liberation Mono';font-size:17.5px;line-height:23px;color:#ff0000;font-weight:normal;letter-spacing:-0.42px;-webkit-text-stroke:0.1px currentColor;">S3: 17689.96667</div>
<div class="t" style="left:629.70px;top:413.72px;font-family:'Liberation Sans';font-size:8.3px;line-height:11px;color:#101010;font-weight:normal;transform:scaleX(0.7924);transform-origin:0 0;-webkit-text-stroke:0.12px currentColor;">guarantee...</div>
<div class="t" style="left:674.60px;top:413.72px;font-family:'Liberation Sans';font-size:8.3px;line-height:11px;color:#101010;font-weight:normal;transform:scaleX(0.7904);transform-origin:0 0;-webkit-text-stroke:0.12px currentColor;">status</div>
<div class="t" style="left:719.40px;top:413.72px;font-family:'Liberation Sans';font-size:8.3px;line-height:11px;color:#101010;font-weight:normal;transform:scaleX(0.8446);transform-origin:0 0;-webkit-text-stroke:0.12px currentColor;">direction</div>
<div class="t" style="left:764.20px;top:413.72px;font-family:'Liberation Sans';font-size:8.3px;line-height:11px;color:#101010;font-weight:normal;transform:scaleX(0.8528);transform-origin:0 0;-webkit-text-stroke:0.12px currentColor;">limitLevel</div>
<div class="t" style="left:808.80px;top:413.72px;font-family:'Liberation Sans';font-size:8.3px;line-height:11px;color:#101010;font-weight:normal;transform:scaleX(0.8139);transform-origin:0 0;-webkit-text-stroke:0.12px currentColor;">level</div>
<div class="t" style="left:853.60px;top:413.72px;font-family:'Liberation Sans';font-size:8.3px;line-height:11px;color:#101010;font-weight:normal;transform:scaleX(0.7995);transform-origin:0 0;-webkit-text-stroke:0.12px currentColor;">affectedDe...</div>
<div class="t" style="left:898.60px;top:413.72px;font-family:'Liberation Sans';font-size:8.3px;line-height:11px;color:#101010;font-weight:normal;transform:scaleX(0.8232);transform-origin:0 0;-webkit-text-stroke:0.12px currentColor;">limitDistan...</div>
<div class="t" style="left:943.40px;top:413.72px;font-family:'Liberation Sans';font-size:8.3px;line-height:11px;color:#101010;font-weight:normal;transform:scaleX(0.7640);transform-origin:0 0;-webkit-text-stroke:0.12px currentColor;">dealRefere...</div>
<div class="t" style="left:988.20px;top:413.72px;font-family:'Liberation Sans';font-size:8.3px;line-height:11px;color:#101010;font-weight:normal;transform:scaleX(0.7751);transform-origin:0 0;-webkit-text-stroke:0.12px currentColor;">dealStatus</div>
<div class="t" style="left:629.70px;top:426.57px;font-family:'Liberation Sans';font-size:8.3px;line-height:11px;color:#101010;font-weight:normal;transform:scaleX(0.7292);transform-origin:0 0;-webkit-text-stroke:0.12px currentColor;">False</div>
<div class="t" style="left:674.60px;top:426.57px;font-family:'Liberation Sans';font-size:8.3px;line-height:11px;color:#101010;font-weight:normal;transform:scaleX(0.7442);transform-origin:0 0;-webkit-text-stroke:0.12px currentColor;">OPEN</div>
<div class="t" style="left:719.40px;top:426.57px;font-family:'Liberation Sans';font-size:8.3px;line-height:11px;color:#101010;font-weight:normal;transform:scaleX(0.6602);transform-origin:0 0;-webkit-text-stroke:0.12px currentColor;">SELL</div>
<div class="t" style="left:764.20px;top:426.57px;font-family:'Liberation Sans';font-size:8.3px;line-height:11px;color:#101010;font-weight:normal;transform:scaleX(0.8517);transform-origin:0 0;-webkit-text-stroke:0.12px currentColor;">None</div>
<div class="t" style="left:808.80px;top:426.57px;font-family:'Liberation Sans';font-size:8.3px;line-height:11px;color:#101010;font-weight:normal;transform:scaleX(0.7724);transform-origin:0 0;-webkit-text-stroke:0.12px currentColor;">18115.6</div>
<div class="t" style="left:853.60px;top:426.57px;font-family:'Liberation Sans';font-size:8.3px;line-height:11px;color:#101010;font-weight:normal;transform:scaleX(0.8517);transform-origin:0 0;-webkit-text-stroke:0.12px currentColor;">None</div>
<div class="t" style="left:898.60px;top:426.57px;font-family:'Liberation Sans';font-size:8.3px;line-height:11px;color:#101010;font-weight:normal;transform:scaleX(0.8517);transform-origin:0 0;-webkit-text-stroke:0.12px currentColor;">None</div>
<div class="t" style="left:943.40px;top:426.57px;font-family:'Liberation Sans';font-size:8.3px;line-height:11px;color:#101010;font-weight:normal;transform:scaleX(0.8517);transform-origin:0 0;-webkit-text-stroke:0.12px currentColor;">None</div>
<div class="t" style="left:988.20px;top:426.57px;font-family:'Liberation Sans';font-size:8.3px;line-height:11px;color:#101010;font-weight:normal;transform:scaleX(0.7148);transform-origin:0 0;-webkit-text-stroke:0.12px currentColor;">ACCEPTED</div>
<div class="t" style="left:629.70px;top:437.09px;font-family:'Liberation Sans';font-size:8.3px;line-height:11px;color:#101010;font-weight:normal;transform:scaleX(0.7292);transform-origin:0 0;-webkit-text-stroke:0.12px currentColor;">False</div>
<div class="t" style="left:674.60px;top:437.09px;font-family:'Liberation Sans';font-size:8.3px;line-height:11px;color:#101010;font-weight:normal;transform:scaleX(0.6870);transform-origin:0 0;-webkit-text-stroke:0.12px currentColor;">DELETED</div>
<div class="t" style="left:719.40px;top:437.09px;font-family:'Liberation Sans';font-size:8.3px;line-height:11px;color:#101010;font-weight:normal;transform:scaleX(0.7150);transform-origin:0 0;-webkit-text-stroke:0.12px currentColor;">BUY</div>
<div class="t" style="left:764.20px;top:437.09px;font-family:'Liberation Sans';font-size:8.3px;line-height:11px;color:#101010;font-weight:normal;transform:scaleX(0.8517);transform-origin:0 0;-webkit-text-stroke:0.12px currentColor;">None</div>
<div class="t" style="left:808.80px;top:437.09px;font-family:'Liberation Sans';font-size:8.3px;line-height:11px;color:#101010;font-weight:normal;transform:scaleX(0.7724);transform-origin:0 0;-webkit-text-stroke:0.12px currentColor;">18115.4</div>
<div class="t" style="left:853.60px;top:437.09px;font-family:'Liberation Sans';font-size:8.3px;line-height:11px;color:#101010;font-weight:normal;transform:scaleX(0.8517);transform-origin:0 0;-webkit-text-stroke:0.12px currentColor;">None</div>
<div class="t" style="left:898.60px;top:437.09px;font-family:'Liberation Sans';font-size:8.3px;line-height:11px;color:#101010;font-weight:normal;transform:scaleX(0.8517);transform-origin:0 0;-webkit-text-stroke:0.12px currentColor;">None</div>
<div class="t" style="left:943.40px;top:437.09px;font-family:'Liberation Sans';font-size:8.3px;line-height:11px;color:#101010;font-weight:normal;transform:scaleX(0.8517);transform-origin:0 0;-webkit-text-stroke:0.12px currentColor;">None</div>
<div class="t" style="left:988.20px;top:437.09px;font-family:'Liberation Sans';font-size:8.3px;line-height:11px;color:#101010;font-weight:normal;transform:scaleX(0.7148);transform-origin:0 0;-webkit-text-stroke:0.12px currentColor;">ACCEPTED</div>
<div class="t" style="left:629.70px;top:447.61px;font-family:'Liberation Sans';font-size:8.3px;line-height:11px;color:#101010;font-weight:normal;transform:scaleX(0.7292);transform-origin:0 0;-webkit-text-stroke:0.12px currentColor;">False</div>
<div class="t" style="left:674.60px;top:447.61px;font-family:'Liberation Sans';font-size:8.3px;line-height:11px;color:#101010;font-weight:normal;transform:scaleX(0.7442);transform-origin:0 0;-webkit-text-stroke:0.12px currentColor;">OPEN</div>
<div class="t" style="left:719.40px;top:447.61px;font-family:'Liberation Sans';font-size:8.3px;line-height:11px;color:#101010;font-weight:normal;transform:scaleX(0.6602);transform-origin:0 0;-webkit-text-stroke:0.12px currentColor;">SELL</div>
<div class="t" style="left:764.20px;top:447.61px;font-family:'Liberation Sans';font-size:8.3px;line-height:11px;color:#101010;font-weight:normal;transform:scaleX(0.8517);transform-origin:0 0;-webkit-text-stroke:0.12px currentColor;">None</div>
<div class="t" style="left:808.80px;top:447.61px;font-family:'Liberation Sans';font-size:8.3px;line-height:11px;color:#101010;font-weight:normal;transform:scaleX(0.7724);transform-origin:0 0;-webkit-text-stroke:0.12px currentColor;">18119.6</div>
<div class="t" style="left:853.60px;top:447.61px;font-family:'Liberation Sans';font-size:8.3px;line-height:11px;color:#101010;font-weight:normal;transform:scaleX(0.8517);transform-origin:0 0;-webkit-text-stroke:0.12px currentColor;">None</div>
<div class="t" style="left:898.60px;top:447.61px;font-family:'Liberation Sans';font-size:8.3px;line-height:11px;color:#101010;font-weight:normal;transform:scaleX(0.8517);transform-origin:0 0;-webkit-text-stroke:0.12px currentColor;">None</div>
<div class="t" style="left:943.40px;top:447.61px;font-family:'Liberation Sans';font-size:8.3px;line-height:11px;color:#101010;font-weight:normal;transform:scaleX(0.8517);transform-origin:0 0;-webkit-text-stroke:0.12px currentColor;">None</div>
<div class="t" style="left:988.20px;top:447.61px;font-family:'Liberation Sans';font-size:8.3px;line-height:11px;color:#101010;font-weight:normal;transform:scaleX(0.7148);transform-origin:0 0;-webkit-text-stroke:0.12px currentColor;">ACCEPTED</div>
<div class="t" style="left:629.70px;top:458.13px;font-family:'Liberation Sans';font-size:8.3px;line-height:11px;color:#101010;font-weight:normal;transform:scaleX(0.7292);transform-origin:0 0;-webkit-text-stroke:0.12px currentColor;">False</div>
<div class="t" style="left:674.60px;top:458.13px;font-family:'Liberation Sans';font-size:8.3px;line-height:11px;color:#101010;font-weight:normal;transform:scaleX(0.7442);transform-origin:0 0;-webkit-text-stroke:0.12px currentColor;">OPEN</div>
<div class="t" style="left:719.40px;top:458.13px;font-family:'Liberation Sans';font-size:8.3px;line-height:11px;color:#101010;font-weight:normal;transform:scaleX(0.7150);transform-origin:0 0;-webkit-text-stroke:0.12px currentColor;">BUY</div>
<div class="t" style="left:764.20px;top:458.13px;font-family:'Liberation Sans';font-size:8.3px;line-height:11px;color:#101010;font-weight:normal;transform:scaleX(0.8517);transform-origin:0 0;-webkit-text-stroke:0.12px currentColor;">None</div>
<div class="t" style="left:808.80px;top:458.13px;font-family:'Liberation Sans';font-size:8.3px;line-height:11px;color:#101010;font-weight:normal;transform:scaleX(0.7724);transform-origin:0 0;-webkit-text-stroke:0.12px currentColor;">18115.4</div>
<div class="t" style="left:853.60px;top:458.13px;font-family:'Liberation Sans';font-size:8.3px;line-height:11px;color:#101010;font-weight:normal;transform:scaleX(0.8517);transform-origin:0 0;-webkit-text-stroke:0.12px currentColor;">None</div>
<div class="t" style="left:898.60px;top:458.13px;font-family:'Liberation Sans';font-size:8.3px;line-height:11px;color:#101010;font-weight:normal;transform:scaleX(0.8517);transform-origin:0 0;-webkit-text-stroke:0.12px currentColor;">None</div>
<div class="t" style="left:943.40px;top:458.13px;font-family:'Liberation Sans';font-size:8.3px;line-height:11px;color:#101010;font-weight:normal;transform:scaleX(0.8517);transform-origin:0 0;-webkit-text-stroke:0.12px currentColor;">None</div>
<div class="t" style="left:988.20px;top:458.13px;font-family:'Liberation Sans';font-size:8.3px;line-height:11px;color:#101010;font-weight:normal;transform:scaleX(0.7148);transform-origin:0 0;-webkit-text-stroke:0.12px currentColor;">ACCEPTED</div>
<div class="t" style="left:626.90px;top:500.53px;font-family:'Liberation Sans';font-size:8px;line-height:10px;color:#000;font-weight:normal;transform:scaleX(0.7905);transform-origin:0 0;-webkit-text-stroke:0.12px currentColor;">last updated: 15:38:25</div>
</body></html>
